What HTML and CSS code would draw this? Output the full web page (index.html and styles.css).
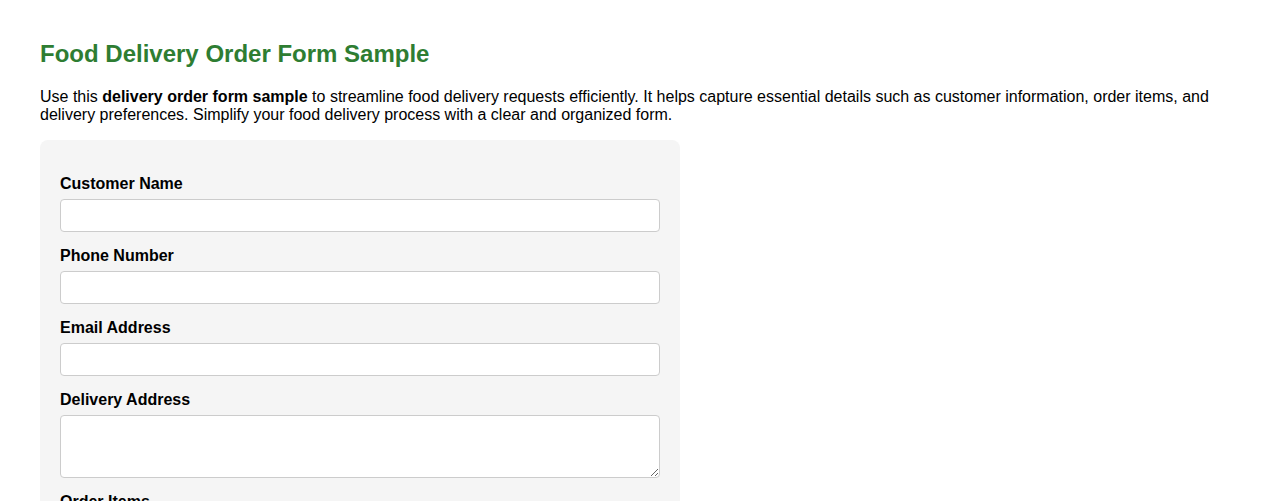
FILE: index.html
```html
<!DOCTYPE html>
<html lang="en">
<head>
<meta charset="utf-8">
<title>Food Delivery Order Form Sample</title>
<link rel="stylesheet" href="styles.css">
</head>
<body>
<h1 class="title">Food Delivery Order Form Sample</h1>
<p class="intro">Use this <strong>delivery order form sample</strong> to streamline food delivery requests efficiently. It helps capture essential details such as customer information, order items, and delivery preferences. Simplify your food delivery process with a clear and organized form.</p>
<form class="form">
  <label class="label" for="name">Customer Name</label>
  <input class="field line" id="name" type="text">
  <label class="label" for="phone">Phone Number</label>
  <input class="field line" id="phone" type="tel">
  <label class="label" for="email">Email Address</label>
  <input class="field line" id="email" type="email">
  <label class="label" for="addr">Delivery Address</label>
  <textarea class="field area" id="addr"></textarea>
  <label class="label" for="items">Order Items</label>
  <textarea class="field area" id="items"></textarea>
</form>
</body>
</html>
```
FILE: styles.css
```css
body {
  margin: 0;
  padding: 20px 40px;
  font-family: "Liberation Sans", Arial, sans-serif;
  color: #000;
  background: #fff;
}
.title {
  font-size: 24px;
  color: #2e7d32;
  margin: 20px 0 20px;
}
.intro {
  font-size: 16px;
  margin: 0 0 16px;
}
.form {
  width: 600px;
  background: #f5f5f5;
  padding: 20px;
  border-radius: 8px;
}
.label {
  display: block;
  font-weight: bold;
  font-size: 16px;
  margin: 15px 0 6px;
}
.field {
  display: block;
  box-sizing: border-box;
  width: 100%;
  padding: 8px;
  font-size: 14px;
  font-family: "Liberation Sans", Arial, sans-serif;
  border: 1px solid #ccc;
  border-radius: 4px;
  background: #fff;
  margin: 0;
}
.line {
  height: 33px;
}
.area {
  height: 63px;
}
```
